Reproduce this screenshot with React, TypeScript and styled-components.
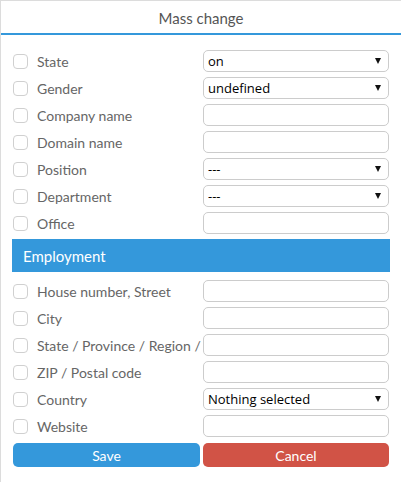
import React from "react";
import styled, { createGlobalStyle } from "styled-components";

const Global = createGlobalStyle`
  html, body { margin: 0; padding: 0; background: #fff; }
  body { font-family: Lato, "Open Sans", sans-serif; }
  * { box-sizing: border-box; }
`;

const Dialog = styled.div`
  width: 401px;
  height: 482px;
  border-top: 1px solid #dcdcdc;
  border-left: 1px solid #dcdcdc;
  display: flex;
  flex-direction: column;
  overflow: hidden;
`;

const Header = styled.div`
  height: 34px;
  border-bottom: 2px solid #3498db;
  display: flex;
  align-items: center;
  justify-content: center;
  font-size: 15px;
  color: #555;
  padding-top: 1px;
`;

const Body = styled.div`
  padding: 12px 12px 0 12px;
  display: flex;
  flex-direction: column;
`;

const Row = styled.div`
  height: 27px;
  display: grid;
  grid-template-columns: 190px 186px;
  align-items: center;
`;

const LabelCell = styled.label`
  display: flex;
  align-items: center;
  gap: 9px;
  overflow: hidden;
  white-space: nowrap;
  font-size: 14px;
  color: #666;
  padding-top: 1px;
`;

const Check = styled.input.attrs({ type: "checkbox" })`
  appearance: none;
  margin: 0;
  flex: none;
  width: 15px;
  height: 15px;
  border: 1px solid #d0d0d0;
  border-radius: 4px;
  background: #fff;
`;

const TextInput = styled.input.attrs({ type: "text" })`
  width: 186px;
  height: 22px;
  margin: 0;
  border: 1px solid #cccccc;
  border-radius: 5px;
  background: #fff;
  outline: none;
`;

const SelectWrap = styled.div`
  position: relative;
  width: 186px;
  height: 22px;
`;

const Select = styled.select`
  appearance: none;
  width: 100%;
  height: 100%;
  margin: 0;
  padding: 0 20px 0 4px;
  border: 1px solid #cccccc;
  border-radius: 5px;
  background: #fff;
  font-family: "Open Sans", sans-serif;
  font-size: 13px;
  color: #000;
  outline: none;
`;

const Arrow = styled.span`
  position: absolute;
  right: 8px;
  top: 8px;
  width: 0;
  height: 0;
  border-left: 3.5px solid transparent;
  border-right: 3.5px solid transparent;
  border-top: 6px solid #111;
  pointer-events: none;
`;

const Section = styled.div`
  margin: 3px -1px 5px -1px;
  height: 33px;
  background: #3498db;
  color: #fff;
  font-size: 15px;
  display: flex;
  align-items: center;
  padding-left: 11px;
`;

const Buttons = styled.div`
  margin-top: 4px;
  display: grid;
  grid-template-columns: 187px 186px;
  gap: 3px;
`;

const Button = styled.button<{ $tone: "save" | "cancel" }>`
  height: 24px;
  border: none;
  border-radius: 5px;
  font-family: Lato, "Open Sans", sans-serif;
  font-size: 14px;
  color: #fff;
  background: ${(p) => (p.$tone === "save" ? "#3498db" : "#d15346")};
  padding: 0;
`;

type Field = { label: string; kind: "text" | "select"; value?: string; options?: string[] };

const top: Field[] = [
  { label: "State", kind: "select", value: "on", options: ["on", "off"] },
  { label: "Gender", kind: "select", value: "undefined", options: ["undefined", "male", "female"] },
  { label: "Company name", kind: "text" },
  { label: "Domain name", kind: "text" },
  { label: "Position", kind: "select", value: "---", options: ["---"] },
  { label: "Department", kind: "select", value: "---", options: ["---"] },
  { label: "Office", kind: "text" },
];

const employment: Field[] = [
  { label: "House number, Street", kind: "text" },
  { label: "City", kind: "text" },
  { label: "State / Province / Region / District", kind: "text" },
  { label: "ZIP / Postal code", kind: "text" },
  { label: "Country", kind: "select", value: "Nothing selected", options: ["Nothing selected"] },
  { label: "Website", kind: "text" },
];

function FieldRow({ f }: { f: Field }) {
  return (
    <Row>
      <LabelCell>
        <Check />
        {f.label}
      </LabelCell>
      {f.kind === "text" ? (
        <TextInput />
      ) : (
        <SelectWrap>
          <Select defaultValue={f.value}>
            {f.options!.map((o) => (
              <option key={o}>{o}</option>
            ))}
          </Select>
          <Arrow />
        </SelectWrap>
      )}
    </Row>
  );
}

export default function App() {
  return (
    <>
      <Global />
      <Dialog>
        <Header>Mass change</Header>
        <Body>
          {top.map((f) => (
            <FieldRow key={f.label} f={f} />
          ))}
          <Section>Employment</Section>
          {employment.map((f) => (
            <FieldRow key={f.label} f={f} />
          ))}
          <Buttons>
            <Button $tone="save">Save</Button>
            <Button $tone="cancel">Cancel</Button>
          </Buttons>
        </Body>
      </Dialog>
    </>
  );
}
